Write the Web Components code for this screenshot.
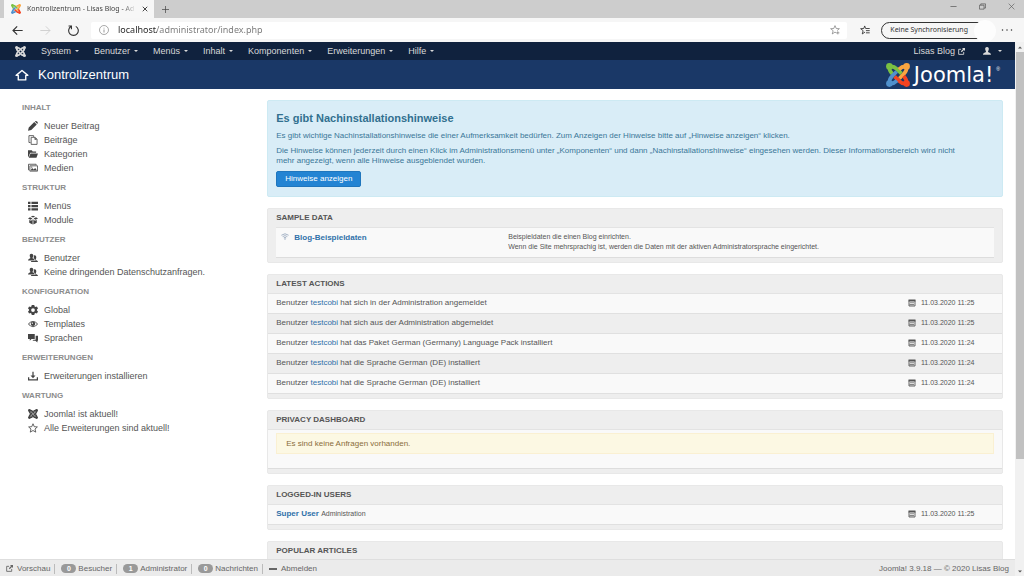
<!DOCTYPE html>
<html lang="de">
<head>
<meta charset="utf-8">
<title>Kontrollzentrum - Lisas Blog - Administration</title>
<style>
  html, body { height: 100%; }
  body { margin: 0; display: flex; flex-direction: column; overflow: hidden; background: #fff; color: #555;
    font: 8px/10px "Liberation Sans", Arial, sans-serif; }
</style>
</head>
<body>
<browser-tabs></browser-tabs>
<browser-toolbar></browser-toolbar>
<browser-view>
  <admin-menu></admin-menu>
  <page-title>Kontrollzentrum</page-title>
  <admin-content>
    <side-nav slot="nav">
      <nav-group label="Inhalt">
        <nav-item icon="pencil">Neuer Beitrag</nav-item>
        <nav-item icon="copy">Beiträge</nav-item>
        <nav-item icon="folder">Kategorien</nav-item>
        <nav-item icon="pictures">Medien</nav-item>
      </nav-group>
      <nav-group label="Struktur">
        <nav-item icon="list">Menüs</nav-item>
        <nav-item icon="cube">Module</nav-item>
      </nav-group>
      <nav-group label="Benutzer">
        <nav-item icon="users">Benutzer</nav-item>
        <nav-item icon="users">Keine dringenden Datenschutzanfragen.</nav-item>
      </nav-group>
      <nav-group label="Konfiguration">
        <nav-item icon="cog">Global</nav-item>
        <nav-item icon="eye">Templates</nav-item>
        <nav-item icon="chat">Sprachen</nav-item>
      </nav-group>
      <nav-group label="Erweiterungen">
        <nav-item icon="download">Erweiterungen installieren</nav-item>
      </nav-group>
      <nav-group label="Wartung">
        <nav-item icon="joomla">Joomla! ist aktuell!</nav-item>
        <nav-item icon="star">Alle Erweiterungen sind aktuell!</nav-item>
      </nav-group>
    </side-nav>
    <post-install-alert></post-install-alert>
    <data-panel label="Sample Data" inset><sample-row></sample-row></data-panel>
    <data-panel label="Latest Actions">
      <log-row date="11.03.2020 11:25">Benutzer <a href="#user">testcobi</a> hat sich in der Administration angemeldet</log-row>
      <log-row alt date="11.03.2020 11:25">Benutzer <a href="#user">testcobi</a> hat sich aus der Administration abgemeldet</log-row>
      <log-row date="11.03.2020 11:24">Benutzer <a href="#user">testcobi</a> hat das Paket German (Germany) Language Pack installiert</log-row>
      <log-row alt date="11.03.2020 11:24">Benutzer <a href="#user">testcobi</a> hat die Sprache German (DE) installiert</log-row>
      <log-row date="11.03.2020 11:24">Benutzer <a href="#user">testcobi</a> hat die Sprache German (DE) installiert</log-row>
    </data-panel>
    <data-panel label="Privacy Dashboard"><notice-box>Es sind keine Anfragen vorhanden.</notice-box></data-panel>
    <data-panel label="Logged-in Users">
      <log-row date="11.03.2020 11:25"><a class="name" href="#user">Super User</a> <small>Administration</small></log-row>
    </data-panel>
    <data-panel label="Popular Articles"></data-panel>
  </admin-content>
  <status-bar></status-bar>
</browser-view>

<script>
const mark = (...colors) => colors.map((c, i) =>
  `<g transform="rotate(${i * 90} 12 12)" fill="none" stroke="${c}" stroke-width="3.800"><circle cx="3.4" cy="3.4" r="3.300" fill="${c}" stroke="none"/><path d="M3.6 3.6C7 3 9 4.200 11 6.200L15.500 10.700M3.600 3.600C3 7 4.400 9 6.400 11"/></g>`).join('');

const ICONS = {
  joomla: ['0 0 24 24', mark('currentColor', 'currentColor', 'currentColor', 'currentColor')],
  joomlaColor: ['0 0 24 24', mark('#7ac143', '#f9a541', '#f44321', '#5091cd')],
  pencil: ['0 0 16 16', '<path d="M0 15.500l1.200-5L10 1.700l4 4L5.200 14.400zM11 .9L12.300 0Q14 0 15 1t.6 2.200L14.800 4.700z"/>'],
  copy: ['0 0 16 16', '<path fill="none" stroke="currentColor" stroke-width="1.300" d="M4 12H1.500V1H9v2M5 3.700h6.500l3 3V15H5z"/><path d="M10.500 3.500v4h4z"/>'],
  folder: ['0 0 16 16', '<path d="M0 2h6l1.500 2H13v2H3.500L1 12.500H0zM4 7h12l-2.500 7H1.200z"/>'],
  pictures: ['0 0 16 16', '<path fill="none" stroke="currentColor" stroke-width="1.300" d="M2 11H.8V2H13v1.500M3 4.500h12.300V13H3z"/><path d="M4 12l2.500-4 2.500 2.500L11.500 8l3 4z"/><circle cx="6" cy="6.500" r="1"/>'],
  list: ['0 0 16 16', '<path d="M0 1h4v3.600H0zM5.500 1H16v3.600H5.500zM0 6.200h4v3.600H0zM5.500 6.200H16v3.600H5.500zM0 11.400h4V15H0zM5.500 11.400H16V15H5.500z"/>'],
  cube: ['0 0 16 16', '<path d="M4.500 2.500L8 1l3.500 1.500L8 4zM0 6l3-2.500L7 5 4.500 7.500zM16 6l-3-2.500L9 5l2.500 2.500zM2 8l3 1 2.400-2.300V15L2 12.500zM14 8l-3 1-2.400-2.300V15L14 12.500z"/>'],
  users: ['0 0 16 16', '<path d="M5.500 1C8 1 8.500 3 8.300 4.600 8 6.500 7.300 7 7.200 8c0 1 3.800 1 3.800 4H0c0-3 3.800-3 3.800-4 0-1-.7-1.500-1-3.400C2.600 3 3 1 5.500 1z"/><path d="M10.500 3.500c2.500 0 3 2.500 2.700 4C13 9.200 12.300 9.600 12.200 10.500c0 1 3.800 1.500 3.800 4H5v-1.700h7C12 10 9.500 9 8.800 8.500 10 6.500 9 5 9 4z"/>'],
  cog: ['0 0 16 16', '<path fill-rule="evenodd" d="M6 0h4l.6 2.400 1.400.8 2.300-.8 1.700 3.200L14.300 7.300v1.400L16 10.400l-1.700 3.200-2.300-.8-1.400.8L10 16H6l-.6-2.400-1.400-.8-2.300.8L0 10.400l1.700-1.700V7.300L0 5.600l1.700-3.200 2.300.8 1.400-.8zM8 5a3 3 0 100 6 3 3 0 000-6z"/>'],
  eye: ['0 0 16 16', '<path fill-rule="evenodd" d="M0 8q3.500-5 8-5t8 5q-3.500 5-8 5T0 8zm1.600 0Q4 11.500 8 11.500T14.400 8Q12 4.500 8 4.500T1.600 8z"/><circle cx="8" cy="7.600" r="3.600"/><circle cx="7" cy="6.600" r="1.100" fill="#fff"/>'],
  chat: ['0 0 17 16', '<path d="M0 1h11.500v8.500H6L3 12.500V9.500H0zM13 4h4v8.500h-1V15.500l-3.500-3H7.500L9.500 10.800H13z"/>'],
  download: ['0 0 16 16', '<path d="M7 1h2v6h3L8 11.500 4 7h3zM0 10h2v3h12v-3h2v5H0z"/>'],
  star: ['0 0 16 16', '<path fill="none" stroke="currentColor" stroke-width="1.300" stroke-linejoin="round" d="M8 1.200l2 4.700 5 .4-3.800 3.300 1.200 5L8 12l-4.400 2.600 1.200-5L1 6.300l5-.4z"/>'],
  calendar: ['0 0 16 16', '<path d="M1 1h14v4H1z"/><path fill="none" stroke="currentColor" stroke-width="1.800" d="M2 3v11h12V3"/><path opacity=".7" d="M4 6.500h8V8H4zM3 9.500h9v3H3z"/>'],
  wifi: ['0 0 16 14', '<path fill="none" stroke="currentColor" stroke-width="1.500" d="M.8 4.500Q8-1.500 15.200 4.500M3.300 7.200Q8 3.400 12.700 7.200M5.600 9.700Q8 8 10.400 9.700"/><circle cx="8" cy="12" r="1.300"/>'],
  home: ['0 0 18 16', '<path fill="none" stroke="currentColor" stroke-width="1.800" stroke-linejoin="round" d="M1.200 8.500L9 2 16.800 8.500H14V14.500H4V8.500z"/>'],
  user: ['0 0 16 16', '<path d="M8 0c3 0 4 2.200 3.600 4.600C11.300 7 10 8 10 9.300c0 1.200 6 1.700 6 6.200H0c0-4.500 6-5 6-6.200C6 8 4.700 7 4.400 4.600 4 2.200 5 0 8 0z"/>'],
  external: ['0 0 16 16', '<path fill="none" stroke="currentColor" stroke-width="2" d="M7 3H1.500v11.500H13V9"/><path d="M9 0h7v7l-2.500-2.500-5 5-2-2 5-5z"/>'],
  minus: ['0 0 16 4', '<path d="M0 0h16v4H0z"/>'],
  caret: ['0 0 8 4', '<path d="M0 0h8L4 4z"/>'],
  caretUp: ['0 0 8 4', '<path d="M0 4h8L4 0z"/>'],
  back: ['0 0 16 16', '<path fill="none" stroke="currentColor" stroke-width="1.700" d="M15.500 8H1.500M7.500 2l-6 6 6 6"/>'],
  forward: ['0 0 16 16', '<path fill="none" stroke="currentColor" stroke-width="1.300" d="M.5 8h14M8.500 2l6 6-6 6"/>'],
  reload: ['0 0 16 16', '<path fill="none" stroke="currentColor" stroke-width="1.600" d="M4.300 2.200a7 7 0 107-.2M5 6V1.500H.8"/>'],
  info: ['0 0 16 16', '<circle cx="8" cy="8" r="7.200" fill="none" stroke="currentColor"/><path d="M7.400 7h1.200v5H7.400zM7.400 4.300h1.200v1.300H7.400z"/>'],
  starPlus: ['0 0 16 16', '<path fill="none" stroke="currentColor" stroke-width="1.100" d="M10 12.700L8 11.300l-4.400 3 1.400-5.200L1 5.900l5-.3L8 1l2 4.600 5 .3-3.600 3M12.500 10v5M10 12.500h5"/>'],
  starLines: ['0 0 16 16', '<path fill="none" stroke="currentColor" stroke-width="1.400" d="M8 11.300l-4.400 3L5 9.100 1 5.900l5-.3L7.500 1.500 9 5.600h6.500M9.500 9H15.500M9.500 12.500H15.500"/>'],
  close: ['0 0 16 16', '<path fill="none" stroke="currentColor" stroke-width="2.200" d="M2 2l12 12M14 2L2 14"/>'],
  closeThin: ['0 0 16 16', '<path fill="none" stroke="currentColor" stroke-width="1.400" d="M1.500 1.500l13 13M14.500 1.500l-13 13"/>'],
  plus: ['0 0 16 16', '<path fill="none" stroke="currentColor" stroke-width="1.600" d="M8 0v16M0 8h16"/>'],
  dash: ['0 0 16 16', '<path fill="none" stroke="currentColor" stroke-width="1.600" d="M1 8h14"/>'],
  restore: ['0 0 16 16', '<path fill="none" stroke="currentColor" stroke-width="1.600" d="M1 5h10.500v9H1zM4 5V2h11v9.500h-3"/>'],
  dots: ['0 0 16 4', '<circle cx="2" cy="2" r="1"/><circle cx="8" cy="2" r="1"/><circle cx="14" cy="2" r="1"/>']
};

const RESET = `:host,*{box-sizing:border-box}a{color:inherit;text-decoration:none}button{font:inherit;color:inherit;background:none;border:0;padding:0;margin:0;display:flex;align-items:center}`;

function component(name, css, html) {
  customElements.define(name, class extends HTMLElement {
    constructor() {
      super();
      const t = document.createElement('template');
      t.innerHTML = `<style>${RESET}${css}</style>` + (typeof html === 'function' ? html(this) : html);
      this.attachShadow({ mode: 'open' }).append(t.content.cloneNode(true));
    }
  });
}

customElements.define('ui-icon', class extends HTMLElement {
  static observedAttributes = ['name'];
  constructor() {
    super();
    this.attachShadow({ mode: 'open' });
  }
  attributeChangedCallback(_, __, name) {
    const [box, body] = ICONS[name];
    this.shadowRoot.innerHTML = `<style>:host{display:inline-flex;flex:none;width:10px;height:10px}svg{width:100%;height:100%;fill:currentColor}</style><svg viewBox="${box}" aria-hidden="true">${body}</svg>`;
  }
});

component('browser-tabs', `
  :host{display:flex;flex:none;height:18px;background:#cdcdcd;padding-left:4px;color:#444;font:7px/12px "Noto Sans","Open Sans",sans-serif}
  .tab{display:flex;align-items:center;width:150px;background:#f7f7f7;padding:0 6px 0 7px;gap:6px}
  .title{flex:1;overflow:hidden;white-space:nowrap;-webkit-mask-image:linear-gradient(to right,#000 88%,transparent)}
  .new{width:22px;justify-content:center}
  .window{display:flex;margin-left:auto;padding-right:9px;gap:22px;align-items:center;height:13px;color:#555}
  .s{width:7px;height:7px}
  .tab button .s{color:#222;width:6px;height:6px}`,
  `<div class="tab"><ui-icon name="joomlaColor"></ui-icon><span class="title">Kontrollzentrum - Lisas Blog - Ad</span><button aria-label="Tab schließen"><ui-icon class="s" name="close"></ui-icon></button></div>
   <button class="new" aria-label="Neuer Tab"><ui-icon class="s" name="plus"></ui-icon></button>
   <div class="window"><button aria-label="Minimieren"><ui-icon class="s" name="dash"></ui-icon></button><button aria-label="Wiederherstellen"><ui-icon class="s" name="restore"></ui-icon></button><button aria-label="Schließen"><ui-icon class="s" name="closeThin"></ui-icon></button></div>`);

component('browser-toolbar', `
  :host{display:flex;flex:none;align-items:center;height:24px;background:#f6f6f6;color:#333;padding:0 11px 0 12px;font:7px/10px "Noto Sans","Open Sans",sans-serif}
  .nav{display:flex;gap:17px;width:79px}
  .nav ui-icon{width:11px;height:11px}
  .off{color:#ccc}
  .address{flex:1;display:flex;align-items:center;height:17px;background:#fff;border-radius:2px;padding:0 7px 0 8px;gap:9px}
  .address ui-icon{color:#777}
  input{flex:1;min-width:0;border:0;outline:0;padding:0;margin:0;font:9px/14px "Noto Sans","Open Sans",sans-serif;color:#333;
    background:linear-gradient(to right,#222 39px,#777 39px);-webkit-background-clip:text;background-clip:text;-webkit-text-fill-color:transparent}
  .fav{margin:0 11px 0 13px}
  .profile{height:17px;border:1px solid #333;border-radius:9px;padding:0 26px 0 8px;white-space:nowrap;position:relative}
  .profile::after{content:"";position:absolute;right:-2px;top:-3px;width:22px;height:22px;border-radius:50%;background:#fdfdfd}
  .more{margin-left:6px}
  .more ui-icon{width:12px;height:4px}`,
  `<div class="nav"><button aria-label="Zurück"><ui-icon name="back"></ui-icon></button><button class="off" aria-label="Vorwärts"><ui-icon name="forward"></ui-icon></button><button aria-label="Neu laden"><ui-icon name="reload"></ui-icon></button></div>
   <div class="address"><ui-icon name="info"></ui-icon><input aria-label="Adresse" value="localhost/administrator/index.php"><button aria-label="Favorit hinzufügen"><ui-icon name="starPlus"></ui-icon></button></div>
   <button class="fav" aria-label="Favoriten"><ui-icon name="starLines"></ui-icon></button>
   <button class="profile">Keine Synchronisierung</button>
   <button class="more" aria-label="Mehr"><ui-icon name="dots"></ui-icon></button>`);

component('browser-view', `
  :host{display:flex;flex:1;min-height:0}
  .page{flex:1;min-width:0;display:flex;flex-direction:column;overflow:hidden}
  .bar{width:9px;flex:none;background:#f1f1f1;display:flex;flex-direction:column;align-items:center;padding:4px 0 3px 1px;gap:3px;color:#555}
  .bar ui-icon{width:4px;height:3px}
  .track{flex:1;align-self:stretch}
  .thumb{height:79%;background:#c1c1c1}`,
  `<div class="page"><slot></slot></div><div class="bar"><ui-icon name="caretUp"></ui-icon><div class="track"><div class="thumb"></div></div><ui-icon name="caret"></ui-icon></div>`);

component('admin-menu', `
  :host{display:flex;flex:none;align-items:center;height:18px;background:#10223e;color:#d9d9d9;padding:0 13px 0 15px;font-size:9px;line-height:12px}
  .brand{width:11px;height:11px}
  nav{display:flex;gap:15px;margin-left:15px}
  button{gap:4px}
  .caret{width:4px;height:2px}
  .right{display:flex;gap:18px;margin-left:auto;align-items:center}
  .right a{display:flex;align-items:center;gap:3px}
  .right .ext{width:7px;height:7px}
  .right .me{width:8px;height:8px}
  .right button{gap:7px}`,
  `<ui-icon class="brand" name="joomla"></ui-icon><nav>${['System', 'Benutzer', 'Menüs', 'Inhalt', 'Komponenten', 'Erweiterungen', 'Hilfe'].map(t => `<button>${t}<ui-icon class="caret" name="caret"></ui-icon></button>`).join('')}</nav>
   <div class="right"><a href="#site">Lisas Blog<ui-icon class="ext" name="external"></ui-icon></a><button aria-label="Benutzermenü"><ui-icon class="me" name="user"></ui-icon><ui-icon class="caret" name="caret"></ui-icon></button></div>`);

component('page-title', `
  :host{display:flex;flex:none;align-items:center;height:29px;background:#1a3867;color:#fff;padding:0 15px}
  .home{width:14px;height:12px}
  h1{margin:0 0 0 9px;font-size:13px;line-height:16px;font-weight:400}
  .logo{display:flex;align-items:center;margin-left:auto;gap:4px;font:21px/24px "DejaVu Sans",sans-serif}
  .logo ui-icon{width:24px;height:24px}
  sup{font:5px/5px "Liberation Sans",sans-serif;align-self:flex-start;padding-top:4px;margin-left:-1px}`,
  `<ui-icon class="home" name="home"></ui-icon><h1><slot></slot></h1><div class="logo"><ui-icon name="joomlaColor"></ui-icon><span>Joomla!</span><sup>®</sup></div>`);

component('admin-content', `
  :host{display:flex;flex:1;min-height:0;overflow:hidden;padding:11px 12px 0 22px}
  aside{flex:none;width:25%}
  main{flex:1;min-width:0;display:flex;flex-direction:column;gap:11px}`,
  `<aside><slot name="nav"></slot></aside><main><slot></slot></main>`);

component('side-nav', `:host{display:block;padding-top:3px}`, `<nav><slot></slot></nav>`);

component('nav-group', `
  :host{display:block;padding-bottom:8px}
  h2{margin:0 0 6px;font-size:8px;line-height:10px;color:#8c8c8c;text-transform:uppercase}`,
  el => `<h2>${el.getAttribute('label')}</h2><div role="list"><slot></slot></div>`);

component('nav-item', `
  :host{display:block;color:#555;font-size:9px;line-height:14px}
  a{display:flex;align-items:center;gap:6px;padding-left:6px;white-space:nowrap}
  ui-icon{color:#444}`,
  el => `<a href="#item"><ui-icon name="${el.getAttribute('icon')}"></ui-icon><span><slot></slot></span></a>`);

component('post-install-alert', `
  :host{display:block;flex:none;background:#d9edf7;border:1px solid #cdeaf3;border-radius:2px;color:#3a7797;padding:10px 24px 9px 8px}
  h2{margin:0 0 6px;font-size:11px;line-height:14px;color:#31708f}
  p{margin:0 0 5px}
  .btn{display:block;width:fit-content;background:#2384d3;border:1px solid #1f76bd;border-radius:2px;color:#fff;padding:2px 8px;line-height:10px}`,
  `<h2>Es gibt Nachinstallationshinweise</h2>
   <p>Es gibt wichtige Nachinstallationshinweise die einer Aufmerksamkeit bedürfen. Zum Anzeigen der Hinweise bitte auf „Hinweise anzeigen“ klicken.</p>
   <p>Die Hinweise können jederzeit durch einen Klick im Administrationsmenü unter „Komponenten“ und dann „Nachinstallationshinweise“ eingesehen werden. Dieser Informationsbereich wird nicht<br>mehr angezeigt, wenn alle Hinweise ausgeblendet wurden.</p>
   <a class="btn" href="#hints">Hinweise anzeigen</a>`);

component('data-panel', `
  :host{display:block;flex:none;background:#eee;border:1px solid #e8e8e8;border-radius:2px;padding-bottom:4px}
  h2{margin:0;padding:4px 8px;font-size:8px;line-height:10px;color:#555;text-transform:uppercase}
  .body{border-top:1px solid #e3e3e3}
  :host([inset]) .body{margin:0 8px}`,
  el => `<h2>${el.getAttribute('label')}</h2><div class="body"><slot></slot></div>`);

component('sample-row', `
  :host{display:grid;grid-template-columns:227px 1fr;background:#f9f9f9;border-bottom:1px solid #ddd;padding:4px 5px 5px}
  .name{display:flex;gap:5px;color:#3071a9;font-weight:700;line-height:11px}
  .name ui-icon{width:8px;height:7px;color:#8a9cb4;margin-top:1px}
  p{margin:0;font-size:7px;line-height:10px}`,
  `<a class="name" href="#sample"><ui-icon name="wifi"></ui-icon>Blog-Beispieldaten</a><p>Beispieldaten die einen Blog einrichten.<br>Wenn die Site mehrsprachig ist, werden die Daten mit der aktiven Administratorsprache eingerichtet.</p>`);

component('log-row', `
  :host{display:flex;align-items:center;background:#f9f9f9;border-bottom:1px solid #e0e0e0;padding:4px 8px 5px}
  :host([alt]){background:#eee}
  ::slotted(a){color:#3071a9;text-decoration:none}
  ::slotted(.name){font-weight:700}
  ::slotted(small){font-size:7px}
  .text{flex:1}
  time{display:flex;align-items:center;gap:5px;width:86px;font-size:7px}
  time ui-icon{width:8px;height:8px}`,
  el => `<span class="text"><slot></slot></span><time><ui-icon name="calendar"></ui-icon>${el.getAttribute('date')}</time>`);

component('notice-box', `
  :host{display:block;background:#f9f9f9;border-bottom:1px solid #ddd;padding:3px 8px 14px}
  div{background:#fcf8e3;border:1px solid #faf0d2;padding:5px 9px;line-height:9px;color:#8a6d3b}`,
  `<div role="status"><slot></slot></div>`);

component('status-bar', `
  :host{display:flex;flex:none;align-items:center;height:17px;background:#ebebeb;border-top:1px solid #dedede;color:#666;padding:1px 6px 0}
  a{display:flex;align-items:center;gap:2px}
  a.lead{gap:4px}
  a+a{margin-left:4px;padding-left:6px;border-left:1px solid #bbb}
  .badge{background:#999;color:#fff;border-radius:5px;font-weight:700;font-size:7px;line-height:9px;width:15px;text-align:center}
  .e{width:7px;height:7px}.m{width:8px;height:2px}
  .copy{margin-left:auto}`,
  `<a class="lead" href="#preview"><ui-icon class="e" name="external"></ui-icon>Vorschau</a><a href="#visitors"><span class="badge">0</span>Besucher</a><a href="#admins"><span class="badge">1</span>Administrator</a><a href="#messages"><span class="badge">0</span>Nachrichten</a><a class="lead" href="#logout"><ui-icon class="m" name="minus"></ui-icon>Abmelden</a><span class="copy">Joomla! 3.9.18 — © 2020 Lisas Blog</span>`);
</script>
</body>
</html>
